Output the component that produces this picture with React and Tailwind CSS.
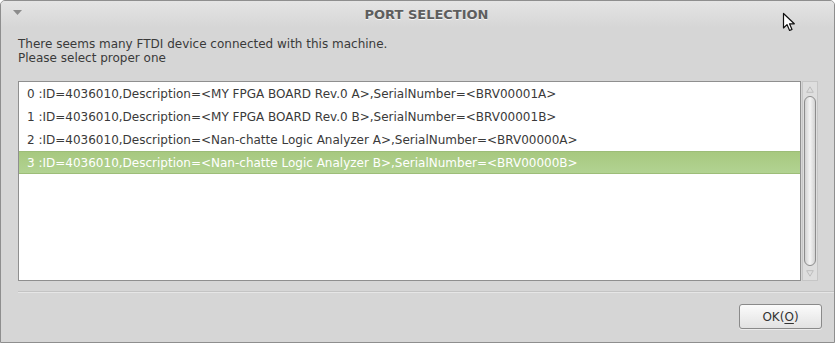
import { useState } from "react";

const devices = [
    "0 :ID=4036010,Description=<MY FPGA BOARD Rev.0 A>,SerialNumber=<BRV00001A>",
    "1 :ID=4036010,Description=<MY FPGA BOARD Rev.0 B>,SerialNumber=<BRV00001B>",
    "2 :ID=4036010,Description=<Nan-chatte Logic Analyzer A>,SerialNumber=<BRV00000A>",
    "3 :ID=4036010,Description=<Nan-chatte Logic Analyzer B>,SerialNumber=<BRV00000B>",
];

export default function App() {
    const [selected, setSelected] = useState(3);

    return (
        <div className="relative w-[835px] h-[343px] flex flex-col bg-[#d6d6d6] border border-[#8e8e8e] rounded-t-[5px] overflow-hidden font-['DejaVu_Sans',sans-serif] text-[12px] text-[#3a3a3a]">
            {/* title bar */}
            <div className="relative h-[27px] flex items-center justify-center pl-[18px] bg-gradient-to-b from-[#e4e4e4] to-[#d6d6d6]">
                <svg className="absolute left-[12px] top-[9px]" width="9" height="6" viewBox="0 0 9 6">
                    <path d="M0 0 H9 L4.5 5 Z" fill="#8c8c8c" />
                </svg>
                <span className="font-bold text-[13px] text-[#5e5e5e] [text-shadow:0_1px_0_#f4f4f4]">PORT SELECTION</span>
            </div>

            <div className="mt-[9px] px-[17px] leading-[14px]">
                <p>There seems many FTDI device connected with this machine.</p>
                <p>Please select proper one</p>
            </div>

            <div className="mt-[16px] ml-[17px] flex h-[200px]">
                <div className="w-[783px] h-full bg-white border border-[#8f8f8f]">
                    {devices.map((d, i) => (
                        <div
                            key={i}
                            onClick={() => setSelected(i)}
                            className={
                                i === selected
                                    ? "h-[23px] flex items-center pl-[8px] text-white bg-gradient-to-b from-[#a7c87f] to-[#b2d392] border-y border-[#9dbd78]"
                                    : "h-[23px] flex items-center pl-[8px]"
                            }
                        >
                            {d}
                        </div>
                    ))}
                </div>
                <div className="ml-[1px] w-[16px] h-full flex flex-col items-center bg-[#dedede] border border-[#c6c6c6]">
                    <svg className="mt-[4px]" width="8" height="7" viewBox="0 0 8 7">
                        <path d="M4 0.8 L7.3 6.3 H0.7 Z" fill="none" stroke="#bdbdbd" strokeWidth="1" />
                    </svg>
                    <div className="mt-[3px] w-[12px] flex-1 rounded-full border border-[#8c8c8c] bg-gradient-to-r from-[#d2d2d2] via-[#f4f4f4] to-[#d2d2d2]"></div>
                    <svg className="mt-[4px] mb-[3px]" width="8" height="7" viewBox="0 0 8 7">
                        <path d="M0.7 0.7 H7.3 L4 6.2 Z" fill="none" stroke="#bdbdbd" strokeWidth="1" />
                    </svg>
                </div>
            </div>

            <div className="mt-[10px] ml-[17px] border-t border-[#c4c4c4] border-b border-b-[#e6e6e6]"></div>

            <div className="flex-1 flex justify-end items-start pt-[11px] pr-[12px]">
                <button className="w-[83px] h-[25px] rounded-[3px] border border-[#8a8a8a] bg-gradient-to-b from-[#fbfbfb] to-[#e2e2e2] text-[12px] text-[#333] shadow-[0_1px_0_#ececec]">
                    OK(<span className="underline underline-offset-2">O</span>)
                </button>
            </div>

            {/* mouse pointer */}
            <svg className="absolute left-[781px] top-[11px]" width="15" height="21" viewBox="0 0 15 21">
                <path d="M1.5 1.5 V16 L5 12.6 L7.6 18.5 L10 17.4 L7.5 11.8 H12.3 Z" fill="#fff" stroke="#111" strokeWidth="1.2" strokeLinejoin="round" />
            </svg>
        </div>
    );
}
